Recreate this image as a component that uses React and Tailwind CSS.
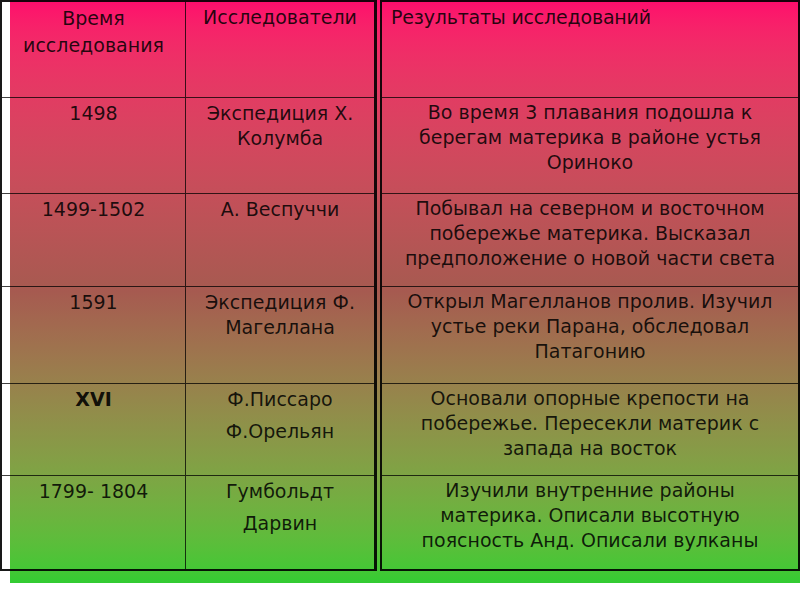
import React from "react";

const ROWS = [
  {
    time: ["1498"],
    who: ["Экспедиция Х.", "Колумба"],
    result: ["Во время 3 плавания подошла к", "берегам материка в районе устья", "Ориноко"],
  },
  {
    time: ["1499-1502"],
    who: ["А. Веспуччи"],
    result: [
      "Побывал на северном и восточном",
      "побережье материка. Высказал",
      "предположение о новой части света",
    ],
  },
  {
    time: ["1591"],
    who: ["Экспедиция Ф.", "Магеллана"],
    result: ["Открыл Магелланов пролив. Изучил", "устье реки Парана, обследовал", "Патагонию"],
  },
  {
    time: ["XVI"],
    bold: true,
    who: ["Ф.Писсаро", "Ф.Орельян"],
    split: true,
    result: ["Основали опорные крепости на", "побережье. Пересекли материк с", "запада на восток"],
  },
  {
    time: ["1799- 1804"],
    who: ["Гумбольдт", "Дарвин"],
    split: true,
    result: [
      "Изучили внутренние районы",
      "материка. Описали высотную",
      "поясность Анд. Описали вулканы",
    ],
  },
];

const gridRows = "grid grid-rows-[96px_96px_93px_97px_92px_1fr]";

function Lines({ lines, split }) {
  return (
    <div className={split ? "flex flex-col gap-[7px]" : "flex flex-col"}>
      {lines.map((l) => (
        <span key={l} className="whitespace-nowrap">
          {l}
        </span>
      ))}
    </div>
  );
}

export default function App() {
  return (
    <div
      className="w-[800px] h-[600px] bg-white text-[19px] leading-[25px] text-black/85"
      style={{ fontFamily: '"DejaVu Sans", Verdana, sans-serif' }}
    >
      <div className="ml-[10px] h-[583px] bg-gradient-to-b from-[#ff0a6c] via-[#a65a50] via-50% to-[#32cc32]">
        <div className="-ml-[10px] flex h-[571px]">
          {/* left table */}
          <div className={`${gridRows} w-[377px] border-2 border-r-[3px] border-black/90 grid-cols-[184px_1fr]`}>
            <div className="col-span-2 grid grid-cols-[184px_1fr] border-b border-black/75">
              <div className="border-r border-black/75 pt-[3px] text-center leading-[27px]">
                Время
                <br />
                исследования
              </div>
              <div className="pt-[3px] text-center">Исследователи</div>
            </div>
            {ROWS.map((r, i) => (
              <div
                key={i}
                className={`col-span-2 grid grid-cols-[184px_1fr] ${
                  i < ROWS.length - 1 ? "border-b border-black/75" : ""
                }`}
              >
                <div
                  className={`border-r border-black/75 pt-[3px] text-center ${
                    r.bold ? "font-bold text-black/90" : ""
                  }`}
                >
                  {r.time[0]}
                </div>
                <div className="flex justify-center pt-[3px] text-center">
                  <Lines lines={r.who} split={r.split} />
                </div>
              </div>
            ))}
          </div>

          {/* right table */}
          <div className={`${gridRows} ml-[3px] w-[420px] border-2 border-black/90`}>
            <div className="border-b border-black/75 pl-[9px] pt-[3px] tracking-[-0.2px]">
              Результаты исследований
            </div>
            {ROWS.map((r, i) => (
              <div
                key={i}
                className={`flex justify-center pt-[2px] text-center ${
                  i < ROWS.length - 1 ? "border-b border-black/75" : ""
                }`}
              >
                <Lines lines={r.result} />
              </div>
            ))}
          </div>
        </div>
      </div>
    </div>
  );
}
